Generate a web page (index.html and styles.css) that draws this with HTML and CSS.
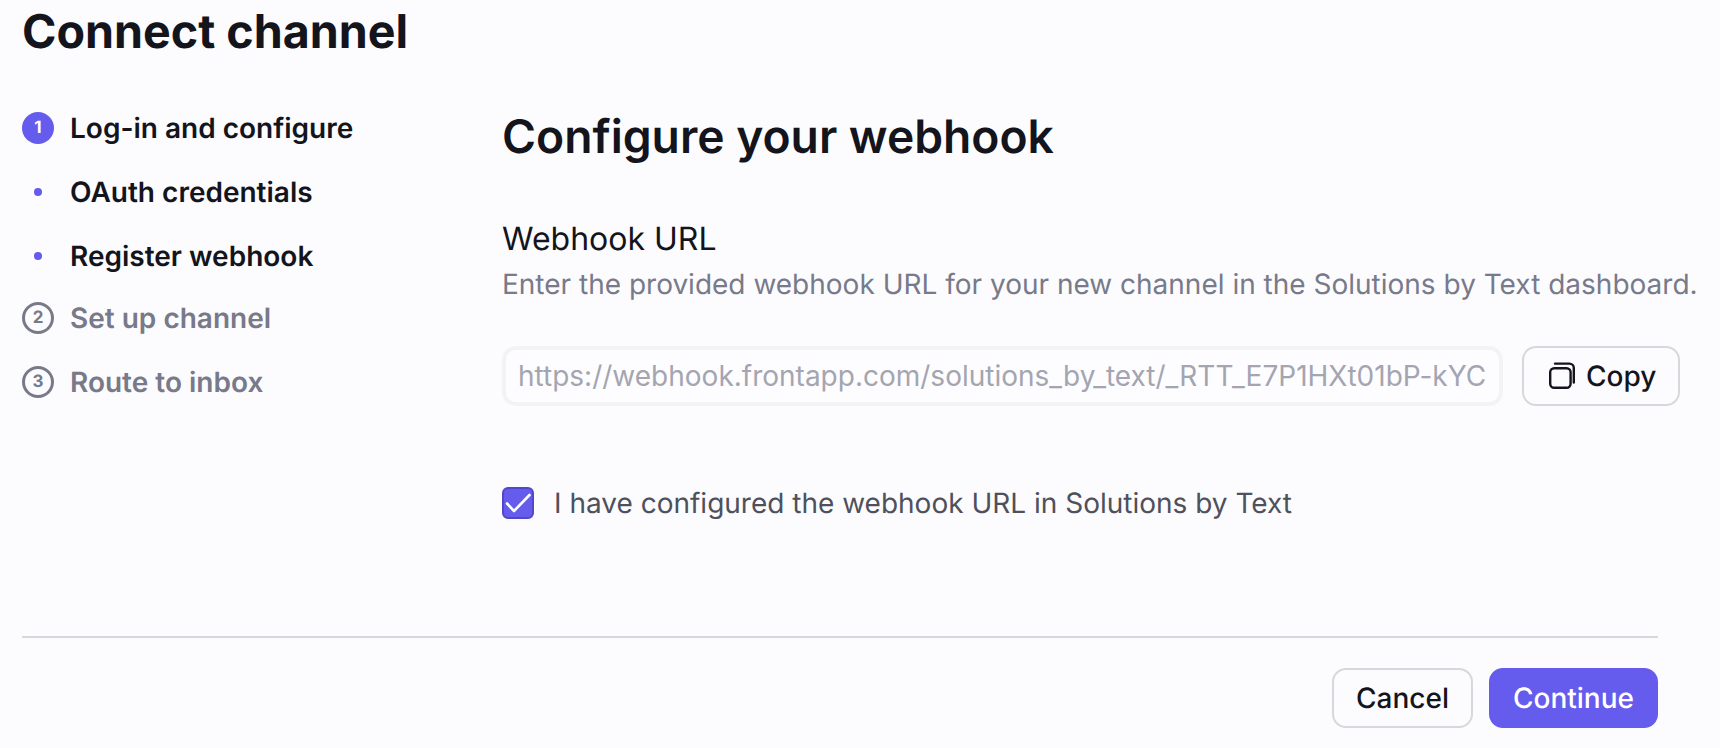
FILE: index.html
```html
<!DOCTYPE html>
<html lang="en">
<head>
    <title>Connect channel</title>
    <link rel="stylesheet" href="styles.css">
</head>
<body>

    <div class="page">
        <h1>Connect channel</h1>

        <div class="columns">
            <ul class="steps">
                <li class="step current">
                    <span class="step-marker filled">1</span>
                    Log-in and configure
                </li>
                <li class="step current">
                    <span class="step-marker"><span class="dot"></span></span>
                    OAuth credentials
                </li>
                <li class="step current">
                    <span class="step-marker"><span class="dot"></span></span>
                    Register webhook
                </li>
                <li class="step after-current">
                    <span class="step-marker outlined">2</span>
                    Set up channel
                </li>
                <li class="step">
                    <span class="step-marker outlined">3</span>
                    Route to inbox
                </li>
            </ul>

            <div class="content">
                <h2>Configure your webhook</h2>

                <div class="field-title">Webhook URL</div>
                <div class="field-help">Enter the provided webhook URL for your new channel in the Solutions by Text dashboard.</div>

                <div class="url-row">
                    <input class="url-input" type="text" disabled value="https://webhook.frontapp.com/solutions_by_text/_RTT_E7P1HXt01bP-kYC">
                    <button type="button" class="btn copy-btn">
                        <svg width="28" height="28" viewBox="0 0 28 28" fill="none" stroke="#14141c" stroke-width="2.4" stroke-linecap="round" stroke-linejoin="round">
                            <rect x="2.2" y="6.2" width="20.4" height="19.6" rx="4"></rect>
                            <path d="M7 1.6h14.3a4.5 4.5 0 0 1 4.5 4.5v14.4"></path>
                        </svg>
                        Copy
                    </button>
                </div>

                <label class="check-row">
                    <span class="checkbox">
                        <svg width="28" height="28" viewBox="0 0 28 28" fill="none" stroke="#fff" stroke-width="2.6" stroke-linecap="round" stroke-linejoin="round">
                            <path d="M3 14.5l7 7.5L25.5 6"></path>
                        </svg>
                    </span>
                    I have configured the webhook URL in Solutions by Text
                </label>
            </div>
        </div>

        <div class="footer">
            <button type="button" class="btn">Cancel</button>
            <button type="button" class="btn primary">Continue</button>
        </div>
    </div>

</body>
</html>
```

FILE: styles.css
```css
body {
    font-family: Inter, 'Noto Sans', sans-serif;
    background-color: #fcfcfe;
    color: #14141c;
    margin: 0;
    height: 748px;
    overflow: hidden;
    text-rendering: geometricPrecision;
}

.page {
    width: 1636px;
    padding-left: 22px;
}

h1 {
    font-size: 46.6px;
    line-height: 64px;
    font-weight: 700;
    margin: 0;
    padding-bottom: 16px;
}

.columns {
    display: flex;
    height: 556px;
}

.steps {
    list-style: none;
    margin: 0;
    padding: 16px 0 0;
    width: 480px;
    flex-shrink: 0;
}

.step {
    display: flex;
    align-items: center;
    gap: 16px;
    height: 64px;
    font-size: 28px;
    font-weight: 600;
    color: #787a8a;
}

.step.current {
    color: #14141c;
}

.step.after-current {
    margin-top: -2px;
}

.step-marker {
    width: 32px;
    height: 32px;
    border-radius: 50%;
    display: flex;
    align-items: center;
    justify-content: center;
    box-sizing: border-box;
    font-size: 17px;
    font-weight: 700;
    flex-shrink: 0;
}

.filled {
    background-color: #655bec;
    color: #fff;
}

.outlined {
    border: 3px solid #787a8a;
}

.dot {
    width: 8px;
    height: 8px;
    border-radius: 50%;
    background-color: #655bec;
}

.content {
    width: 1240px;
    flex-shrink: 0;
}

h2 {
    font-size: 46.2px;
    line-height: 64px;
    font-weight: 600;
    margin: 25px 0 0;
}

.field-title {
    font-size: 32px;
    line-height: 44px;
    margin-top: 48px;
}

.field-help {
    font-size: 28px;
    line-height: 40px;
    color: #787a8a;
    margin-top: 3px;
    white-space: nowrap;
}

.url-row {
    display: flex;
    gap: 19px;
    margin-top: 42px;
}

.url-input {
    width: 1001px;
    height: 60px;
    box-sizing: border-box;
    border: 4px solid #f3f3f6;
    border-radius: 14px;
    background-color: #fdfdff;
    padding: 0 12px;
    font-family: inherit;
    font-size: 28px;
    color: #a4a5b0;
}

.btn {
    height: 60px;
    box-sizing: border-box;
    border: 2px solid #d8d8dc;
    border-radius: 14px;
    background-color: #fcfcfe;
    color: #14141c;
    font-family: inherit;
    font-size: 28px;
    font-weight: 500;
    padding: 0 22px;
    display: flex;
    align-items: center;
    text-rendering: geometricPrecision;
}

.copy-btn {
    width: 158px;
    gap: 10px;
    padding: 0 0 0 24px;
}

.copy-btn svg {
    flex-shrink: 0;
}

.check-row {
    display: flex;
    align-items: center;
    gap: 20px;
    margin-top: 80px;
    font-size: 28px;
    color: #4f505c;
}

.checkbox {
    width: 32px;
    height: 32px;
    box-sizing: border-box;
    border: 2px solid #5148c8;
    border-radius: 6px;
    background-color: #655bec;
    display: flex;
    align-items: center;
    justify-content: center;
}

.footer {
    border-top: 2px solid #d8d8dc;
    display: flex;
    justify-content: flex-end;
    gap: 16px;
    padding-top: 30px;
}

.primary {
    background-color: #655bec;
    border-color: #655bec;
    color: #fff;
}
```
